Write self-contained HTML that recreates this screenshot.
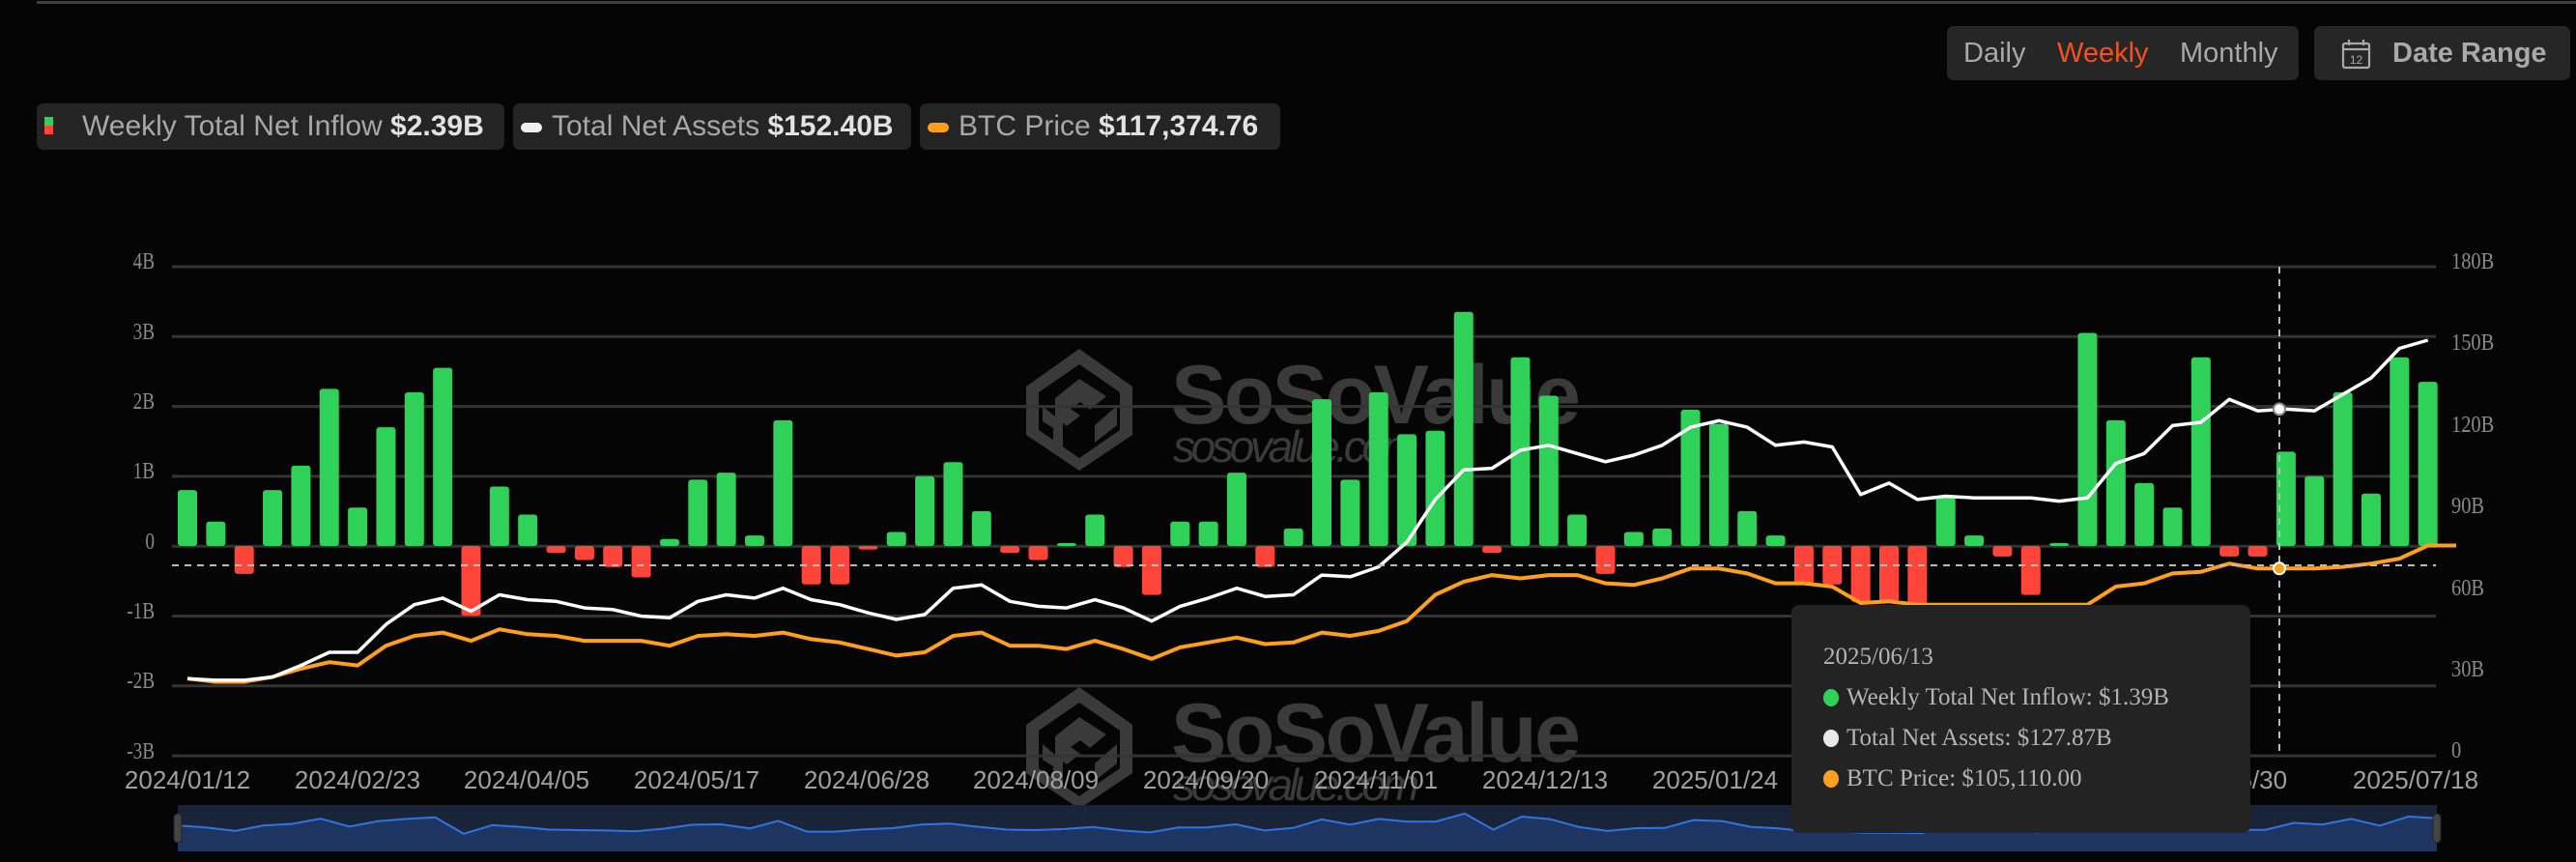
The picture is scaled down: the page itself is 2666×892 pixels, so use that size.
<!DOCTYPE html>
<html><head><meta charset="utf-8">
<style>
html,body{margin:0;padding:0;background:#050505;width:2666px;height:892px;overflow:hidden;font-family:"Liberation Sans Narrow","Liberation Sans",sans-serif}
.topline{position:absolute;left:38px;top:1px;width:2628px;height:3px;background:#3e3e3e}
.pill{position:absolute;top:107px;height:48px;background:#242424;border-radius:7px;color:#a8a8a8;font-size:30px;line-height:48px;white-space:nowrap}
.pill b{color:#e2e2e2;font-weight:bold}
.grp{position:absolute;top:27px;height:56px;background:#262626;border-radius:7px;font-size:29px;line-height:56px;color:#a9a9a9}
.ylab{position:absolute;font-family:"Liberation Serif",serif;color:#8a8a8a;font-size:24px;transform:scaleX(0.8);transform-origin:right center}
.rlab{position:absolute;font-family:"Liberation Serif",serif;color:#8a8a8a;font-size:24px;transform:scaleX(0.85);transform-origin:left center}
.xlab{position:absolute;top:792px;color:#a0a0a0;font-size:26px;width:200px;text-align:center}
.tip{position:absolute;left:1854px;top:626px;width:475px;height:236px;background:#232323;border-radius:8px;font-family:"Liberation Serif",serif;color:#b4b4b4;font-size:25px}
.tip div{position:absolute;left:33px;white-space:nowrap}
.dot{display:inline-block;width:16px;height:18px;border-radius:50%;margin-right:8px;vertical-align:-2px}
</style></head><body>
<div class="topline"></div>

<div class="pill" style="left:38px;width:484px">
 <span style="position:absolute;left:8px;top:14px;width:9px;height:9px;background:#30d158"></span>
 <span style="position:absolute;left:8px;top:23px;width:9px;height:9px;background:#ff453a"></span>
 <span style="position:absolute;left:47px">Weekly Total Net Inflow <b>$2.39B</b></span>
</div>
<div class="pill" style="left:531px;width:412px">
 <span style="position:absolute;left:8px;top:20px;width:22px;height:10px;border-radius:5px;background:#eee"></span>
 <span style="position:absolute;left:40px">Total Net Assets <b>$152.40B</b></span>
</div>
<div class="pill" style="left:952px;width:373px">
 <span style="position:absolute;left:8px;top:20px;width:22px;height:10px;border-radius:5px;background:#ff9f1c"></span>
 <span style="position:absolute;left:40px">BTC Price <b>$117,374.76</b></span>
</div>

<div class="grp" style="left:2015px;width:364px">
 <span style="position:absolute;left:17px">Daily</span>
 <span style="position:absolute;left:114px;color:#f4511e">Weekly</span>
 <span style="position:absolute;left:241px">Monthly</span>
</div>
<div class="grp" style="left:2395px;width:265px">
 <svg style="position:absolute;left:28px;top:13px" width="32" height="32" viewBox="0 0 32 32" fill="none" stroke="#a9a9a9" stroke-width="2.2">
  <rect x="2" y="5" width="27" height="25" rx="2"/><line x1="2" y1="11" x2="29" y2="11"/><line x1="8" y1="1" x2="8" y2="7"/><line x1="23" y1="1" x2="23" y2="7"/>
  <text x="15.5" y="26" font-size="12" fill="#a9a9a9" stroke="none" text-anchor="middle" font-family="Liberation Sans">12</text>
 </svg>
 <span style="position:absolute;left:81px;font-weight:bold">Date Range</span>
</div>

<svg id="ch" style="position:absolute;left:0;top:0" width="2666" height="892"></svg>

<div class="ylab" style="right:2506px;top:258px">4B</div>
<div class="ylab" style="right:2506px;top:331px">3B</div>
<div class="ylab" style="right:2506px;top:403px">2B</div>
<div class="ylab" style="right:2506px;top:475px">1B</div>
<div class="ylab" style="right:2506px;top:548px">0</div>
<div class="ylab" style="right:2506px;top:620px">-1B</div>
<div class="ylab" style="right:2506px;top:692px">-2B</div>
<div class="ylab" style="right:2506px;top:765px">-3B</div>

<div class="rlab" style="left:2537px;top:258px">180B</div>
<div class="rlab" style="left:2537px;top:342px">150B</div>
<div class="rlab" style="left:2537px;top:427px">120B</div>
<div class="rlab" style="left:2537px;top:511px">90B</div>
<div class="rlab" style="left:2537px;top:596px">60B</div>
<div class="rlab" style="left:2537px;top:680px">30B</div>
<div class="rlab" style="left:2537px;top:764px">0</div>

<div class="xlab" style="left:94px">2024/01/12</div>
<div class="xlab" style="left:270px">2024/02/23</div>
<div class="xlab" style="left:445px">2024/04/05</div>
<div class="xlab" style="left:621px">2024/05/17</div>
<div class="xlab" style="left:797px">2024/06/28</div>
<div class="xlab" style="left:972px">2024/08/09</div>
<div class="xlab" style="left:1148px">2024/09/20</div>
<div class="xlab" style="left:1324px">2024/11/01</div>
<div class="xlab" style="left:1499px">2024/12/13</div>
<div class="xlab" style="left:1675px">2025/01/24</div>
<div class="xlab" style="left:1851px">2025/03/07</div>
<div class="xlab" style="left:2026px">2025/04/18</div>
<div class="xlab" style="left:2202px">2025/05/30</div>
<div class="xlab" style="left:2400px">2025/07/18</div>

<div class="tip">
 <div style="top:40px">2025/06/13</div>
 <div style="top:82px"><span class="dot" style="background:#30d158"></span>Weekly Total Net Inflow: $1.39B</div>
 <div style="top:124px"><span class="dot" style="background:#e8e8e8"></span>Total Net Assets: $127.87B</div>
 <div style="top:166px"><span class="dot" style="background:#ff9f1c"></span>BTC Price: $105,110.00</div>
</div>

<script>
var NS="http://www.w3.org/2000/svg",svg=document.getElementById('ch');
function el(t,a,p){var e=document.createElementNS(NS,t);for(var k in a)e.setAttribute(k,a[k]);(p||svg).appendChild(e);return e;}
function wm(dy){
 var g=el('g',{transform:'translate(0,'+dy+')',fill:'#3a3a3a',stroke:'none'});
 el('path',{d:'M1117 361 L1172 400 L1172 450 L1117 487 L1062 450 L1062 400 Z M1117 377 L1075 406 L1075 445 L1117 474 L1159 445 L1159 406 Z','fill-rule':'evenodd'},g);
 el('path',{d:'M1117 392 L1145 410 L1128 424 L1118 416 L1108 423 L1118 430 L1104 441 L1092 432 L1092 412 Z M1079 420 L1100 438 L1100 466 L1090 458 L1090 443 L1079 436 Z M1156 420 L1156 440 L1133 458 L1133 440 Z'},g);
 var t=el('text',{x:1212,y:438,'font-family':'Liberation Sans','font-weight':'bold','font-size':86,fill:'#3a3a3a',textLength:424},g);t.textContent='SoSoValue';
 var u=el('text',{x:1214,y:478,'font-family':'Liberation Sans','font-style':'italic','font-size':46,fill:'#3a3a3a',textLength:255},g);u.textContent='sosovalue.com';
}
wm(0);wm(350);
for(var i=0;i<8;i++){var y=276+i*72.3;el('line',{x1:178,x2:2521,y1:y,y2:y,stroke:'#333','stroke-width':3});}
var inf=[0.8,0.35,-0.4,0.8,1.15,2.25,0.55,1.7,2.2,2.55,-1.0,0.85,0.45,-0.1,-0.2,-0.3,-0.45,0.1,0.95,1.05,0.15,1.8,-0.55,-0.55,-0.05,0.2,1.0,1.2,0.5,-0.1,-0.2,0.02,0.45,-0.3,-0.7,0.35,0.35,1.05,-0.3,0.25,2.1,0.95,2.2,1.6,1.65,3.35,-0.1,2.7,2.15,0.45,-0.4,0.2,0.25,1.95,1.75,0.5,0.15,-0.55,-0.55,-0.8,-0.8,-0.85,0.7,0.15,-0.15,-0.7,0.02,3.05,1.8,0.9,0.55,2.7,-0.15,-0.15,1.35,1.0,2.2,0.75,2.7,2.35];
var wh=[413,414,414,412,405,397,397,380,368,364,372,362,365,366,370,371,375,376,366,362,364,358,365,368,373,377,374,358,356,366,369,370,365,370,378,369,364,358,363,362,350,351,345,330,304,286,285,274,271,276,281,277,271,260,256,260,271,269,272,301,294,304,302,303,303,303,305,303,282,276,259,257,243,250,249,250,240,230,212,207];
var or=[413,415,415,412,407,403,405,393,387,385,390,383,386,387,390,390,390,393,387,386,387,385,389,391,395,399,397,387,385,393,393,395,390,395,401,394,391,388,392,391,385,387,384,378,362,354,350,352,350,350,355,356,352,346,346,349,355,355,357,367,366,368,368,368,368,368,368,368,357,355,349,348,343,346,346,346,345,343,340,332,332];
function X(i){return 194+i*29.35;}
var Z=565,S=72.3;
for(var i=0;i<inf.length;i++){var v=inf[i],h=Math.max(Math.abs(v)*S,3),x=X(i)-10;
 var y=v>=0?Z-h:Z;
 el('rect',{x:x,y:y,width:20,height:h,rx:3,fill:v>=0?'#30d158':'#ff453a'});}
function pts(a){return a.map(function(y,i){return X(i).toFixed(1)+','+(y*1.7003).toFixed(1);}).join(' ');}
el('polyline',{points:pts(or),fill:'none',stroke:'#ff9f1c','stroke-width':4,'stroke-linejoin':'round'});
el('polyline',{points:pts(wh),fill:'none',stroke:'#ffffff','stroke-width':3.5,'stroke-linejoin':'round'});
el('line',{x1:178,x2:2521,y1:585,y2:585,stroke:'#bbb','stroke-width':2,'stroke-dasharray':'7,6'});
el('line',{x1:2359,x2:2359,y1:276,y2:782,stroke:'#bbb','stroke-width':2,'stroke-dasharray':'7,6'});
el('circle',{cx:2359,cy:249*1.7003,r:6,fill:'#fff',stroke:'#888','stroke-width':2});
el('circle',{cx:2359,cy:346*1.7003,r:6,fill:'#ff9f1c',stroke:'#fff','stroke-width':2});
el('rect',{x:184,y:833,width:2338,height:48,fill:'#1a2438'});
var np=[];
for(var i=0;i<inf.length;i++){var xx=184+i*(2338/(inf.length-1)),yy=858-inf[i]*4.8;np.push(xx.toFixed(1)+','+yy.toFixed(1));}
el('polygon',{points:'184,881 '+np.join(' ')+' 2522,881',fill:'#1e3562'});
el('polyline',{points:np.join(' '),fill:'none',stroke:'#2f74e0','stroke-width':2});
el('rect',{x:180,y:842,width:8,height:30,rx:4,fill:'#444',stroke:'#222','stroke-width':1});
el('rect',{x:2518,y:842,width:8,height:30,rx:4,fill:'#444',stroke:'#222','stroke-width':1});
</script>
</body></html>
